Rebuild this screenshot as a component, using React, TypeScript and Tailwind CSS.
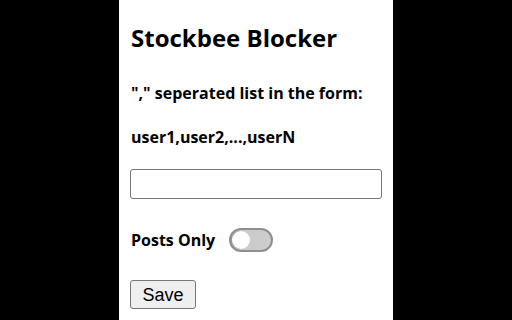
import React from 'react';

export default function App() {
  return (
    <div className="w-[512px] h-[320px] bg-black flex justify-center overflow-hidden">
      <div className="w-[274px] h-full bg-white px-3 text-black font-['Open_Sans',sans-serif]">
        <h1 className="mt-[22px] text-[24px] leading-[32px] font-bold">Stockbee Blocker</h1>
        <p className="mt-[29px] text-[16px] leading-[20px] font-bold">"," seperated list in the form:</p>
        <p className="mt-[24px] text-[16px] leading-[20px] font-bold">user1,user2,...,userN</p>
        <input
          type="text"
          className="mt-[22px] block w-[252px] h-[30px] -ml-px border border-[#767676] rounded-[3px] px-1 bg-white outline-none"
        />
        <div className="mt-[29px] flex items-center h-[24px]">
          <span className="text-[16px] leading-[20px] font-bold">Posts Only</span>
          <button className="ml-[14px] relative w-[44px] h-[24px] rounded-full bg-[#cccccc] border-2 border-[#8f8f8f]">
            <span className="absolute left-[1px] top-1/2 -translate-y-1/2 w-[18px] h-[18px] rounded-full bg-white shadow-[-1px_0_1px_rgba(0,0,0,0.25)]" />
          </button>
        </div>
        <button className="mt-[28px] -ml-px block w-[66px] h-[29px] bg-[#efefef] border border-[#767676] rounded-[3px] text-[18px] leading-none font-['Liberation_Sans',Arial,sans-serif] text-black">
          Save
        </button>
      </div>
    </div>
  );
}
